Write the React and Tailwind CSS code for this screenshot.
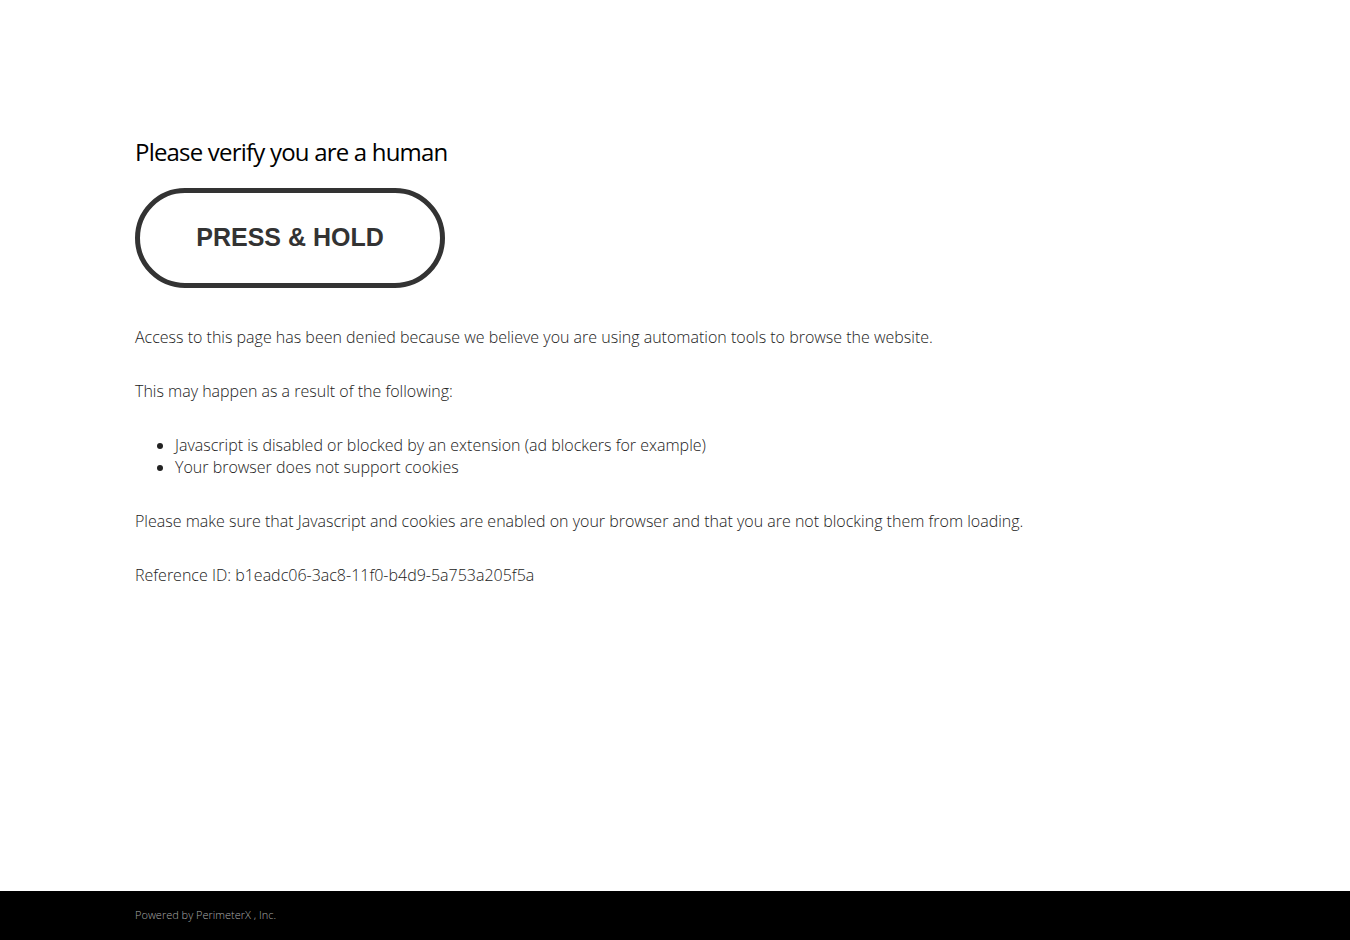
export default function App() {
  return (
    <div className="min-h-screen flex flex-col bg-white" style={{ fontFamily: '"Open Sans", sans-serif' }}>
      <div className="flex-1 pl-[135px] pt-[136px]">
        <h1 className="text-[24px] leading-[32px] font-normal text-black tracking-[-0.8px]">Please verify you are a human</h1>
        <div className="mt-[20px] w-[310px] h-[100px] rounded-full border-[5px] border-[#333] flex items-center justify-center">
          <span className="text-[25px] font-bold text-[#333]" style={{ fontFamily: '"Liberation Sans", Arial, sans-serif' }}>PRESS &amp; HOLD</span>
        </div>
        <div className="mt-[38px] text-[16px] leading-[22px] font-light text-[#222]">
          <p>Access to this page has been denied because we believe you are using automation tools to browse the website.</p>
          <p className="mt-[32px]">This may happen as a result of the following:</p>
          <ul className="mt-[32px] list-disc pl-[40px]">
            <li>Javascript is disabled or blocked by an extension (ad blockers for example)</li>
            <li>Your browser does not support cookies</li>
          </ul>
          <p className="mt-[32px]">Please make sure that Javascript and cookies are enabled on your browser and that you are not blocking them from loading.</p>
          <p className="mt-[32px]">Reference ID: b1eadc06-3ac8-11f0-b4d9-5a753a205f5a</p>
        </div>
      </div>
      <div className="h-[49px] bg-black pl-[135px] flex items-center">
        <span className="text-[11px] font-light text-[#aaa]">Powered by PerimeterX , Inc.</span>
      </div>
    </div>
  );
}
